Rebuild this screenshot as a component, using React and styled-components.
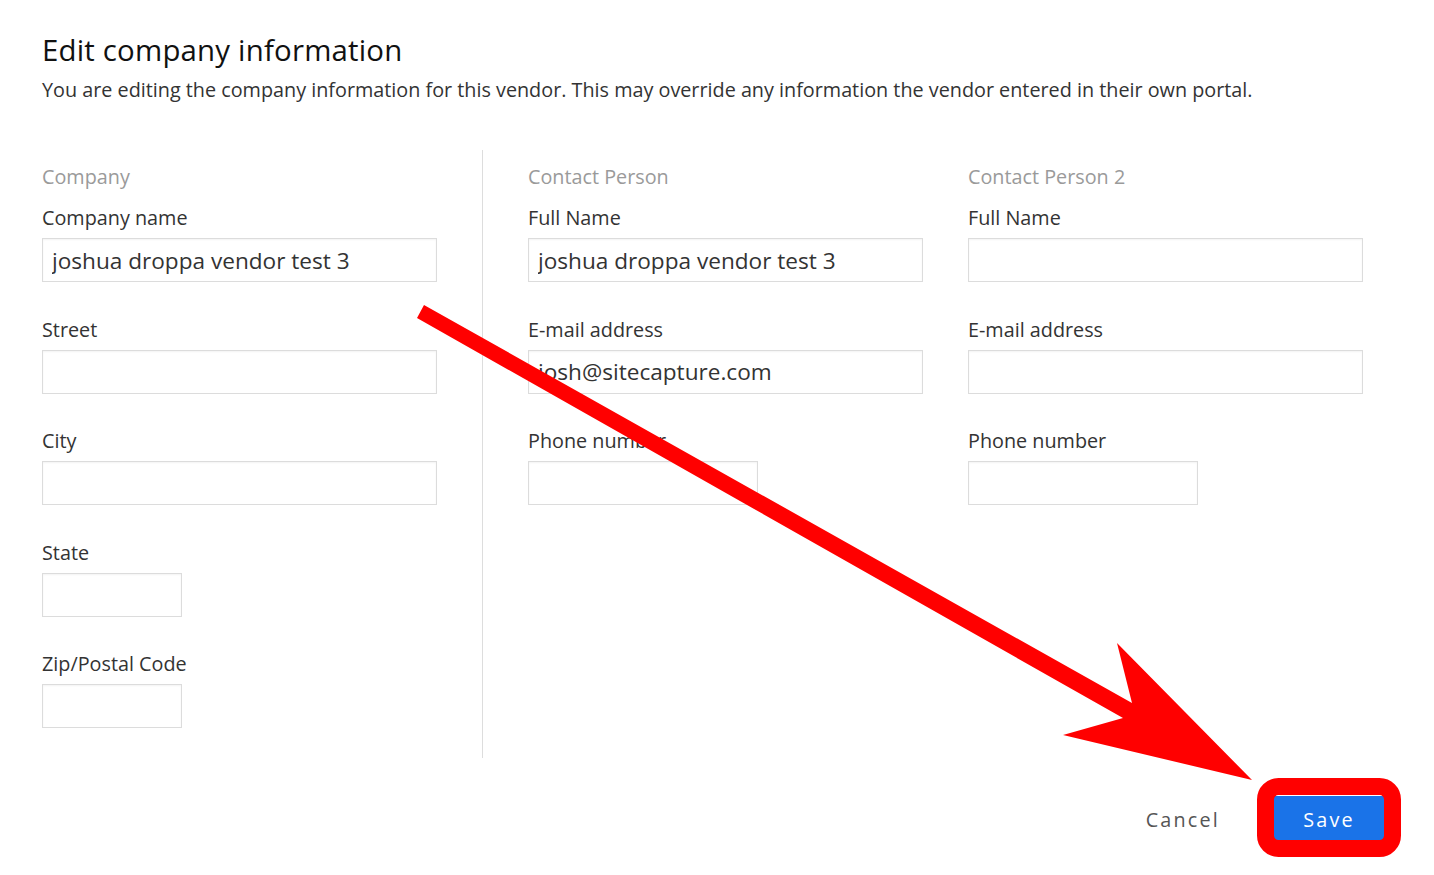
import React from 'react'
import styled, { createGlobalStyle } from 'styled-components'

const GlobalStyle = createGlobalStyle`
  html, body {
    margin: 0;
    padding: 0;
    background: #ffffff;
  }
  body {
    font-family: 'Open Sans', 'Noto Sans', 'Liberation Sans', sans-serif;
    color: #333333;
  }
`

const Page = styled.div`
  position: relative;
  width: 1434px;
  height: 875px;
  box-sizing: border-box;
  padding: 30px 50px 0 42px;
  overflow: hidden;
`

const Title = styled.h1`
  margin: 0;
  font-size: 29.4px;
  line-height: 40px;
  font-weight: 400;
  color: #111111;
  letter-spacing: 0.2px;
`

const Subtitle = styled.p`
  margin: 6px 0 0;
  font-size: 19.8px;
  line-height: 28px;
  color: #333333;
`

const Form = styled.div`
  display: flex;
  margin-top: 46px;
`

const Column = styled.div`
  box-sizing: border-box;
  width: ${p => p.$width}px;
  margin-left: ${p => p.$offset || 0}px;
  padding: 13px 0 30px;
  border-right: ${p => (p.$divider ? '1px solid #dddddd' : 'none')};
  display: flex;
  flex-direction: column;
`

const SectionTitle = styled.div`
  font-size: 19.8px;
  line-height: 28px;
  color: #9a9a9a;
  margin-bottom: 13px;
`

const Field = styled.div`
  display: flex;
  flex-direction: column;
  & + & {
    margin-top: 33.6px;
  }
`

const Label = styled.label`
  font-size: 19.8px;
  line-height: 28px;
  color: #333333;
  margin-bottom: 6px;
`

const Input = styled.input`
  box-sizing: border-box;
  width: ${p => p.$width || 395}px;
  height: 44px;
  padding: 0 9px;
  border: 1px solid #dcdcdc;
  border-radius: 0;
  box-shadow: inset 0 1px 2px rgba(0, 0, 0, 0.05);
  font-family: inherit;
  font-size: 22.6px;
  color: #333333;
  outline: none;
`

const Footer = styled.div`
  display: flex;
  justify-content: flex-end;
  align-items: center;
  gap: 36px;
  margin-top: 38px;
`

const TextButton = styled.button`
  background: none;
  border: none;
  padding: 0 18px;
  font-family: inherit;
  font-size: 19.8px;
  letter-spacing: 2.2px;
  color: #555555;
  cursor: pointer;
`

const PrimaryButton = styled.button`
  width: 110px;
  height: 47px;
  background: #1a73e8;
  border: none;
  font-family: inherit;
  font-size: 19.8px;
  letter-spacing: 2.2px;
  color: #ffffff;
  cursor: pointer;
`

const Markup = styled.svg`
  position: absolute;
  left: 0;
  top: 0;
  pointer-events: none;
`

const TextField = ({ label, value, width }) => (
  <Field>
    <Label>{label}</Label>
    <Input $width={width} defaultValue={value} />
  </Field>
)

export default function App() {
  return (
    <>
      <GlobalStyle />
      <Page>
        <Title>Edit company information</Title>
        <Subtitle>
          You are editing the company information for this vendor. This may override any information the vendor entered in their own portal.
        </Subtitle>

        <Form>
          <Column $width={441} $divider>
            <SectionTitle>Company</SectionTitle>
            <TextField label='Company name' value='joshua droppa vendor test 3' />
            <TextField label='Street' />
            <TextField label='City' />
            <TextField label='State' width={140} />
            <TextField label='Zip/Postal Code' width={140} />
          </Column>

          <Column $width={395} $offset={45}>
            <SectionTitle>Contact Person</SectionTitle>
            <TextField label='Full Name' value='joshua droppa vendor test 3' />
            <TextField label='E-mail address' value='josh@sitecapture.com' />
            <TextField label='Phone number' width={230} />
          </Column>

          <Column $width={395} $offset={45}>
            <SectionTitle>Contact Person 2</SectionTitle>
            <TextField label='Full Name' />
            <TextField label='E-mail address' />
            <TextField label='Phone number' width={230} />
          </Column>
        </Form>

        <Footer>
          <TextButton>Cancel</TextButton>
          <PrimaryButton>Save</PrimaryButton>
        </Footer>

        {/* red callout pointing at the save button */}
        <Markup width='1434' height='875' viewBox='0 0 1434 875'>
          <polygon
            fill='#ff0000'
            points='424,305 1132,703 1117,643 1252,780 1063,735 1123,718 417,318'
          />
          <rect
            x='1265.5'
            y='786.5'
            width='127'
            height='62'
            rx='13'
            fill='none'
            stroke='#ff0000'
            strokeWidth='17'
          />
        </Markup>
      </Page>
    </>
  )
}
